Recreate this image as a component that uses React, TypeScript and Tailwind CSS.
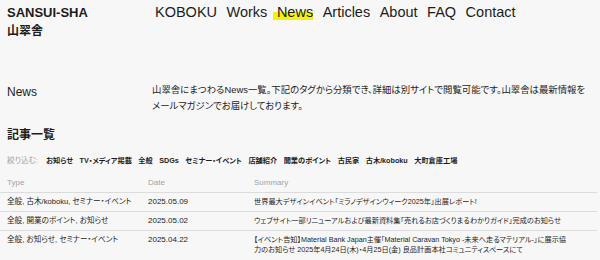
const NAV = ['KOBOKU', 'Works', 'News', 'Articles', 'About', 'FAQ', 'Contact'];

const TAGS = [
  'お知らせ',
  'TV・メディア掲載',
  '全般',
  'SDGs',
  'セミナー・イベント',
  '店舗紹介',
  '開業のポイント',
  '古民家',
  '古木/koboku',
  '大町倉庫工場',
];

const ROWS = [
  {
    type: '全般, 古木/koboku, セミナー・イベント',
    date: '2025.05.09',
    summary: '世界最大デザインイベント「ミラノデザインウィーク2025年」出展レポート!',
  },
  {
    type: '全般, 開業のポイント, お知らせ',
    date: '2025.05.02',
    summary: 'ウェブサイト一部リニューアルおよび最新資料集「売れるお店づくりまるわかりガイド」完成のお知らせ',
  },
  {
    type: '全般, お知らせ, セミナー・イベント',
    date: '2025.04.22',
    summary:
      '【イベント告知】Material Bank Japan主催「Material Caravan Tokyo -未来へ走るマテリアル-」に展示協力のお知らせ 2025年4月24日(木)・4月25日(金) 良品計画本社コミュニティスペースにて',
  },
];

export default function App() {
  return (
    <div className="min-h-[260px] w-[600px] overflow-hidden bg-[#f7f7f7] text-[#1c1c1c] font-['Liberation_Sans','Noto_Sans_CJK_JP',sans-serif] [font-feature-settings:'palt']">
      {/* ── Header ─────────────────────────────────────────── */}
      <header className="flex items-start pl-[7px] pt-[4px]">
        <div className="w-[148px] font-bold">
          <div className="text-[13px] leading-[18px]">SANSUI-SHA</div>
          <div className="text-[12px] leading-[18px]">山翠舎</div>
        </div>
        <nav className="-mt-[1px] flex gap-[9.5px] text-[14.5px] leading-[18px]">
          {NAV.map((item) => (
            <span
              key={item}
              className={
                item === 'News'
                  ? '-ml-[4px] pl-[4px] bg-[linear-gradient(transparent_52%,#f2f20c_52%,#f2f20c_92%,transparent_92%)]'
                  : ''
              }
            >
              {item}
            </span>
          ))}
        </nav>
      </header>

      {/* ── Intro ──────────────────────────────────────────── */}
      <section className="mt-[42px] flex pl-[7px]">
        <h2 className="mt-[2px] w-[145px] text-[12px] leading-[16px]">News</h2>
        <p className="w-[440px] text-[9.4px] leading-[16px]">
          山翠舎にまつわるNews一覧。下記のタグから分類でき、詳細は別サイトで閲覧可能です。山翠舎は最新情報をメールマガジンでお届けしております。
        </p>
      </section>

      {/* ── List ───────────────────────────────────────────── */}
      <h3 className="mt-[12px] pl-[7px] text-[12px] font-bold leading-[18px]">記事一覧</h3>

      <div className="mt-[11px] flex items-center pl-[7px] leading-[12px]">
        <span className="w-[39px] text-[7.6px] text-[#a0a0a0]">絞り込む:</span>
        <div className="flex gap-[6.5px] text-[7.2px] font-bold">
          {TAGS.map((tag) => (
            <span key={tag}>{tag}</span>
          ))}
        </div>
      </div>

      <div className="mr-[3px] mt-[10px] text-[8px]">
        <div className="grid grid-cols-[148px_106px_1fr] pb-[3px] leading-[12px] text-[#a3a3a3]">
          <span className="pl-[7px]">Type</span>
          <span>Date</span>
          <span>Summary</span>
        </div>
        {ROWS.map((row) => (
          <div
            key={row.date}
            className="grid grid-cols-[148px_106px_1fr] border-t border-[#dcdcdc] py-[4px] leading-[10px]"
          >
            <span className="pl-[7px] text-[7.6px]">{row.type}</span>
            <span>{row.date}</span>
            <span className="pr-[27px] text-[7.2px]">{row.summary}</span>
          </div>
        ))}
      </div>
    </div>
  );
}
